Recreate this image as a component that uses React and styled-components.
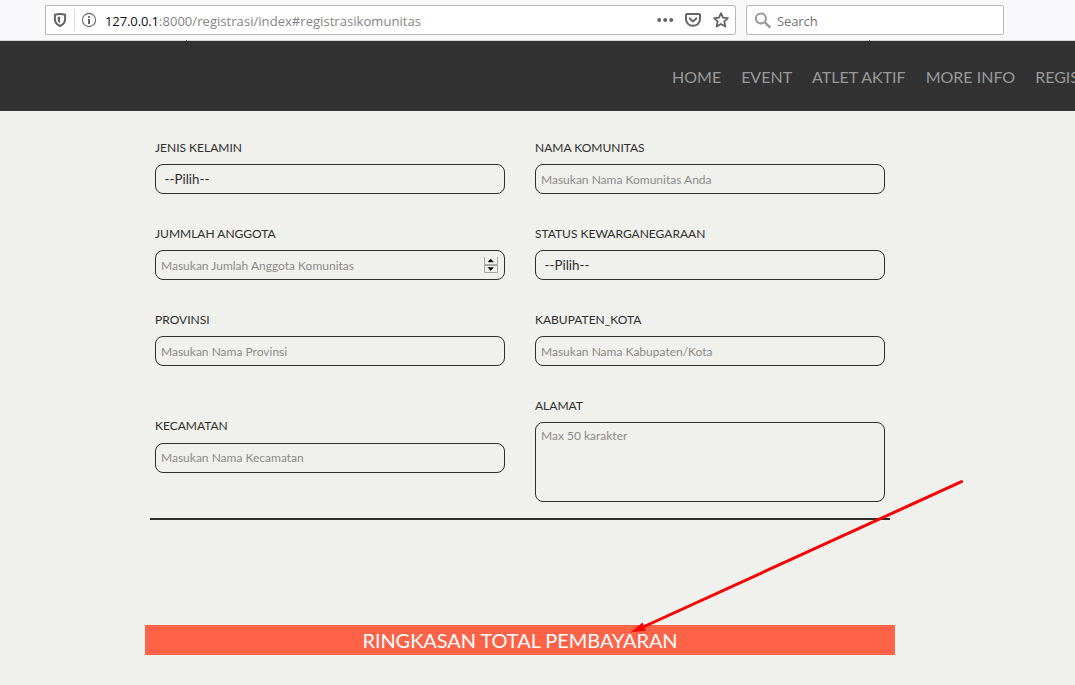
import React from "react";
import styled, { createGlobalStyle, css } from "styled-components";

const GlobalStyle = createGlobalStyle`
  * { box-sizing: border-box; }
  html, body { margin: 0; height: 100%; overflow: hidden; }
  body { background: #f0f0ec; font-family: Lato, "Liberation Sans", sans-serif; color: #2f2f2e; }
`;

const Page = styled.div`
  position: relative;
  width: 1075px;
  height: 685px;
  overflow: hidden;
  background: #f0f0ec;
`;

const BrowserBar = styled.div`
  display: flex;
  gap: 10px;
  height: 41px;
  padding: 5px 0 0 45px;
  background: #f9f9fb;
  border-bottom: 1px solid #d3d3d5;
  font-family: "Open Sans", "Noto Sans", sans-serif;
  font-size: 13px;
`;

const AddressBox = styled.div`
  display: flex;
  align-items: center;
  width: 691px;
  height: 30px;
  padding-left: 7px;
  background: #fff;
  border: 1px solid #b8b8b9;
  border-radius: 2px;
  svg { display: block; flex: none; }
`;

const SearchBox = styled(AddressBox)`
  width: 258px;
  gap: 6px;
  color: #757575;
  span { padding-top: 2px; letter-spacing: -0.1px; }
`;

const Divider = styled.i`
  width: 1px;
  height: 22px;
  margin: 0 6px 0 7px;
  background: #dcdcdc;
`;

const Url = styled.div`
  flex: 1;
  margin-left: 8px;
  padding-top: 2px;
  color: #858585;
  white-space: nowrap;
  letter-spacing: 0.05px;
  b { font-weight: 400; color: #0c0c0d; letter-spacing: -0.1px; }
`;

const AddressActions = styled.div`
  display: flex;
  gap: 11px;
  padding-right: 5px;
`;

const NavBar = styled.nav`
  position: relative;
  display: flex;
  align-items: center;
  gap: 20px;
  height: 70px;
  padding: 2px 0 0 672px;
  background: #323232;
`;

const Notch = styled.i`
  position: absolute;
  top: -1px;
  left: ${(p) => p.$x}px;
  width: 1px;
  height: 1px;
  background: #555;
`;

const NavLink = styled.a`
  flex: none;
  color: #999a9c;
  font-size: 16px;
  line-height: 24px;
`;

const Form = styled.form`
  display: grid;
  grid-template-columns: 350px 350px;
  column-gap: 30px;
  row-gap: 31px;
  width: 740px;
  height: 409px;
  margin-left: 150px;
  padding: 28px 5px 0;
  align-content: start;
  align-items: center;
  border-bottom: 2px solid #2f2f2e;
`;

const Field = styled.label`
  display: flex;
  flex-direction: column;
  gap: ${(p) => (p.$raised ? 8 : 7)}px;
  margin-bottom: ${(p) => (p.$raised ? 9 : 0)}px;
`;

const Caption = styled.span`
  font-size: 12px;
  line-height: 18px;
`;

const control = css`
  display: block;
  width: 350px;
  height: 30px;
  margin: 0;
  padding: 0 5px;
  border: 1px solid #2f2f2e;
  border-radius: 8px;
  background: transparent;
  color: #2f2f2e;
  font: 12px Lato, "Liberation Sans", sans-serif;
  outline: none;
  appearance: none;
  &::placeholder { color: #8c8c89; opacity: 1; }
`;

const Input = styled.input`
  ${control}
  padding-bottom: ${(p) => p.$lift || 0}px;
`;

const TextArea = styled.textarea`
  ${control}
  height: 80px;
  padding: 5px 5px;
  resize: none;
`;

const Select = styled.select`
  ${control}
  padding: 0 8.6px;
  font-size: 13.333px;
`;

const Stepped = styled.span`
  position: relative;
  display: block;
  svg { position: absolute; right: 7px; top: 7px; }
`;

const Banner = styled.h2`
  width: 750px;
  height: 30px;
  margin: 105px 0 0 145px;
  background: #ff6347;
  color: #fff;
  font-size: 20px;
  font-weight: 400;
  line-height: 31px;
  letter-spacing: -0.07px;
  text-align: center;
`;

const Arrow = styled.svg`
  position: absolute;
  left: 620px;
  top: 470px;
`;

const ShieldIcon = () => (
  <svg width="14" height="16" viewBox="0 0 14 16">
    <path d="M7 1.9C5.2 1.9 3.2 2.3 1.9 2.8V7.2C2 10.4 4.2 12.7 7 14C9.8 12.7 12 10.4 12.1 7.2V2.8C10.8 2.3 8.8 1.9 7 1.9Z" fill="none" stroke="#646464" strokeWidth="2" strokeLinejoin="round" />
    <path d="M7 4.6V11.3C5.4 10.3 4.8 8.9 4.7 7.2V5Z" fill="#646464" />
  </svg>
);

const InfoIcon = () => (
  <svg width="16" height="16" viewBox="0 0 16 16">
    <circle cx="8" cy="8" r="6.6" fill="none" stroke="#6b6b6b" strokeWidth="1.1" />
    <rect x="7" y="7" width="2" height="5" fill="#646464" />
    <rect x="7" y="4" width="2" height="2" rx=".7" fill="#646464" />
  </svg>
);

const DotsIcon = () => (
  <svg width="17" height="16" viewBox="0 0 17 16" fill="#646464">
    <circle cx="2.2" cy="8" r="2" /><circle cx="8.2" cy="8" r="2" /><circle cx="14.2" cy="8" r="2" />
  </svg>
);

const PocketIcon = () => (
  <svg width="17" height="16" viewBox="0 0 17 16" fill="none" stroke="#646464" strokeWidth="2" strokeLinecap="round" strokeLinejoin="round">
    <path d="M2 2H14Q15 2 15 3V7C15 11 12 13.8 8 13.8S1 11 1 7V3Q1 2 2 2Z" />
    <path d="M4.7 6.4L8 9.5L11.3 6.4" />
  </svg>
);

const StarIcon = () => (
  <svg width="17" height="16" viewBox="0 0 17 16" fill="none" stroke="#646464" strokeWidth="1.8" strokeLinejoin="round">
    <path d="M8 1.1L10 5.6L14.9 6.1L11.3 9.4L12.4 14.6L8 12L3.6 14.6L4.7 9.4L1.1 6.1L6 5.6Z" />
  </svg>
);

const SearchIcon = () => (
  <svg width="17" height="17" viewBox="0 0 17 17" fill="none" stroke="#969696" strokeWidth="2">
    <circle cx="6.9" cy="6.4" r="5" />
    <path d="M10.5 10L16.3 15.8" strokeWidth="2.3" />
  </svg>
);

const Stepper = () => (
  <svg width="14" height="17" viewBox="0 0 14 17">
    <path d="M.5 0V15.5H13.5V0" fill="none" stroke="#a5a5a5" />
    <path d="M0 8H14" stroke="#a9a9a9" strokeWidth="2" />
    <path d="M4 5H9.4L6.7 2ZM4 10.5H9.4L6.7 13.5Z" fill="#000" stroke="#000" strokeWidth=".4" />
  </svg>
);

const links = ["HOME", "EVENT", "ATLET AKTIF", "MORE INFO", "REGISTRASI"];

export default function App() {
  return (
    <Page>
      <GlobalStyle />
      <BrowserBar>
        <AddressBox>
          <ShieldIcon />
          <Divider />
          <InfoIcon />
          <Url><b>127.0.0.1</b>:8000/registrasi/index#registrasikomunitas</Url>
          <AddressActions><DotsIcon /><PocketIcon /><StarIcon /></AddressActions>
        </AddressBox>
        <SearchBox><SearchIcon /><span>Search</span></SearchBox>
      </BrowserBar>
      <NavBar>
        {links.map((l) => <NavLink key={l}>{l}</NavLink>)}
        <Notch $x={186} />
        <Notch $x={869} />
      </NavBar>
      <Form>
        <Field><Caption>JENIS KELAMIN</Caption><Select><option>--Pilih--</option></Select></Field>
        <Field><Caption>NAMA KOMUNITAS</Caption><Input placeholder="Masukan Nama Komunitas Anda" /></Field>
        <Field>
          <Caption>JUMMLAH ANGGOTA</Caption>
          <Stepped><Input placeholder="Masukan Jumlah Anggota Komunitas" /><Stepper /></Stepped>
        </Field>
        <Field><Caption>STATUS KEWARGANEGARAAN</Caption><Select><option>--Pilih--</option></Select></Field>
        <Field><Caption>PROVINSI</Caption><Input placeholder="Masukan Nama Provinsi" /></Field>
        <Field><Caption>KABUPATEN_KOTA</Caption><Input placeholder="Masukan Nama Kabupaten/Kota" /></Field>
        <Field $raised><Caption>KECAMATAN</Caption><Input $lift={2} placeholder="Masukan Nama Kecamatan" /></Field>
        <Field><Caption>ALAMAT</Caption><TextArea placeholder="Max 50 karakter" /></Field>
      </Form>
      <Banner>RINGKASAN TOTAL PEMBAYARAN</Banner>
      <Arrow width="350" height="170" viewBox="0 0 350 170">
        <path d="M341.5 11.6L22 157.5" stroke="#f90204" strokeWidth="3" strokeLinecap="round" />
        <path d="M11 162.3L22.5 152.5L26 160.5Z" fill="#fb0203" />
      </Arrow>
    </Page>
  );
}
